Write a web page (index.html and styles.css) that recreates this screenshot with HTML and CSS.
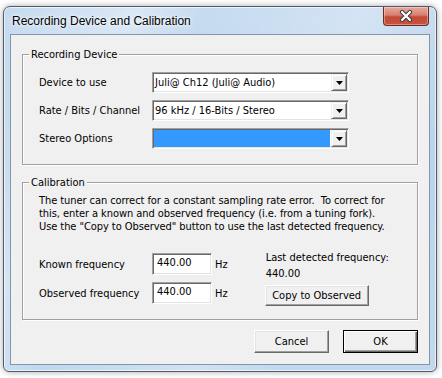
FILE: index.html
```html
<!DOCTYPE html>
<html>
<head>
<meta charset="utf-8">
<link rel="stylesheet" href="styles.css">
</head>
<body>
<div class="window">
  <div class="titlebar">
    <span class="title">Recording Device and Calibration</span>
    <div class="close">
      <svg width="14" height="12" viewBox="0 0 14 12">
        <path d="M3 2 L11 10 M11 2 L3 10" stroke="#3c3c46" stroke-width="4.2" stroke-linecap="round" fill="none"/>
        <path d="M3 2 L11 10 M11 2 L3 10" stroke="#ffffff" stroke-width="2.2" stroke-linecap="round" fill="none"/>
      </svg>
    </div>
  </div>
  <div class="client">
    <div class="group group-device">
      <span class="group-title">Recording Device</span>
      <div class="row">
        <span class="label">Device to use</span>
        <div class="combo"><span class="combo-value">Juli@ Ch12 (Juli@ Audio)</span><span class="combo-btn"><svg width="7" height="4" viewBox="0 0 7 4"><polygon points="0,0 7,0 3.5,4" fill="#000"/></svg></span></div>
      </div>
      <div class="row">
        <span class="label">Rate / Bits / Channel</span>
        <div class="combo"><span class="combo-value">96 kHz / 16-Bits / Stereo</span><span class="combo-btn"><svg width="7" height="4" viewBox="0 0 7 4"><polygon points="0,0 7,0 3.5,4" fill="#000"/></svg></span></div>
      </div>
      <div class="row">
        <span class="label">Stereo Options</span>
        <div class="combo"><span class="combo-value selected"></span><span class="combo-btn"><svg width="7" height="4" viewBox="0 0 7 4"><polygon points="0,0 7,0 3.5,4" fill="#000"/></svg></span></div>
      </div>
    </div>
    <div class="group group-cal">
      <span class="group-title">Calibration</span>
      <p class="desc">The tuner can correct for a constant sampling rate error.&nbsp; To correct for<br>this, enter a known and observed frequency (i.e. from a tuning fork).<br>Use the "Copy to Observed" button to use the last detected frequency.</p>
      <div class="cal-grid">
        <div class="freq-rows">
          <div class="frow"><span class="label">Known frequency</span><span class="textbox">440.00</span><span class="unit">Hz</span></div>
          <div class="frow"><span class="label">Observed frequency</span><span class="textbox">440.00</span><span class="unit">Hz</span></div>
        </div>
        <div class="last">
          <span class="last-line">Last detected frequency:</span>
          <span class="last-line">440.00</span>
          <button class="btn btn-copy">Copy to Observed</button>
        </div>
      </div>
    </div>
    <div class="actions">
      <button class="btn">Cancel</button>
      <button class="btn btn-default">OK</button>
    </div>
  </div>
</div>
</body>
</html>
```
FILE: styles.css
```css
html, body {
  margin: 0;
  padding: 0;
}
body {
  width: 442px;
  height: 378px;
  overflow: hidden;
  background: #ffffff;
  font-family: "DejaVu Sans Condensed", "DejaVu Sans", sans-serif;
  font-size: 11px;
  color: #000;
}
.window {
  margin: 6px 0 0 3px;
  width: 434px;
  height: 366px;
  box-sizing: border-box;
  border: 1px solid #4f5b69;
  border-radius: 7px 7px 6px 6px;
  background:
    linear-gradient(115deg, rgba(255,255,255,0) 0%, rgba(255,255,255,0.35) 22%, rgba(255,255,255,0) 34%, rgba(255,255,255,0.25) 60%, rgba(255,255,255,0) 75%),
    linear-gradient(180deg, #c6dbf0 0%, #bcd4ec 40%, #c2d8ee 100%);
  box-shadow: inset 0 0 0 1px rgba(255,255,255,0.65), 0 0 6px rgba(0,0,0,0.35);
  padding: 0 6px 6px 6px;
  display: flex;
  flex-direction: column;
}
.titlebar {
  height: 27px;
  display: flex;
  justify-content: space-between;
  align-items: flex-start;
}
.title {
  font-family: "Liberation Sans", Arial, sans-serif;
  font-size: 12px;
  margin: 7px 0 0 2px;
  line-height: 14px;
  text-shadow: 0 0 6px rgba(255,255,255,0.9), 0 0 3px rgba(255,255,255,0.9);
}
.close {
  width: 46px;
  height: 19px;
  margin-right: 1px;
  box-sizing: border-box;
  border: 1px solid #6b2a22;
  border-top: none;
  border-radius: 0 0 4px 4px;
  background: linear-gradient(180deg, #e9a89b 0%, #d8806f 45%, #c24a36 55%, #c8533d 100%);
  box-shadow: inset 0 0 0 1px rgba(255,255,255,0.35);
  display: flex;
  align-items: center;
  justify-content: center;
}
.client {
  flex: 1;
  box-sizing: border-box;
  border: 1px solid #8195ad;
  background: #f0f0f0;
  padding: 0 11px 0 11px;
}
.group {
  position: relative;
  box-sizing: border-box;
  width: 396px;
  border: 1px solid #a0a0a0;
  box-shadow: inset 1px 1px 0 #fff, 1px 1px 0 #fff;
}
.group-title {
  position: absolute;
  top: -7px;
  left: 6px;
  padding: 0 2px;
  line-height: 13px;
  background: #f0f0f0;
}
.group-device {
  margin-top: 19px;
  height: 111px;
  padding: 17px 0 0 16px;
  display: flex;
  flex-direction: column;
  gap: 7px;
}
.row {
  display: flex;
  align-items: center;
  height: 21px;
}
.row .label {
  width: 113px;
}
.combo {
  display: flex;
  width: 197px;
  height: 21px;
  box-sizing: border-box;
  background: #fff;
  border: 1px solid;
  border-color: #a0a0a0 #fff #fff #a0a0a0;
  box-shadow: inset 1px 1px 0 #696969, inset -1px -1px 0 #e3e3e3;
  padding: 1px;
}
.combo-value {
  flex: 1;
  padding-left: 1px;
  line-height: 17px;
  white-space: nowrap;
  overflow: hidden;
}
.combo-value.selected {
  background: #3399ff;
  margin-right: 1px;
}
.combo-btn {
  width: 16px;
  height: 17px;
  box-sizing: border-box;
  background: #f0f0f0;
  border: 1px solid;
  border-color: #f0f0f0 #696969 #696969 #f0f0f0;
  box-shadow: inset 1px 1px 0 #fff, inset -1px -1px 0 #a0a0a0;
  display: flex;
  align-items: center;
  justify-content: center;
}
.combo-btn svg {
  display: block;
  margin-top: 1px;
}
.group-cal {
  margin-top: 17px;
  height: 138px;
  padding: 11px 0 0 16px;
}
.desc {
  margin: 0;
  line-height: 13px;
  white-space: nowrap;
  letter-spacing: -0.07px;
}
.cal-grid {
  margin-top: 20px;
  display: flex;
}
.freq-rows {
  display: flex;
  flex-direction: column;
  gap: 7px;
}
.frow {
  display: flex;
  align-items: center;
  height: 22px;
}
.frow .label {
  width: 113px;
}
.textbox {
  width: 60px;
  height: 22px;
  box-sizing: border-box;
  background: #fff;
  border: 1px solid;
  border-color: #a0a0a0 #fff #fff #a0a0a0;
  box-shadow: inset 1px 1px 0 #696969, inset -1px -1px 0 #e3e3e3;
  padding: 2px 0 0 4px;
  line-height: 14px;
}
.unit {
  margin-left: 3px;
}
.last {
  margin-left: 38px;
  margin-top: -3px;
  display: flex;
  flex-direction: column;
  align-items: flex-start;
}
.last-line {
  line-height: 16px;
}
.btn {
  font-family: "DejaVu Sans Condensed", "DejaVu Sans", sans-serif;
  font-size: 11px;
  color: #000;
  background: #f0f0f0;
  box-sizing: border-box;
  border: 1px solid;
  border-color: #fff #696969 #696969 #fff;
  box-shadow: inset -1px -1px 0 #a0a0a0, inset 1px 1px 0 #e3e3e3;
  padding: 0;
  margin: 0;
  border-radius: 0;
  width: 75px;
  height: 23px;
}
.btn-copy {
  width: 104px;
  height: 21px;
  margin-top: 3px;
  margin-left: -1px;
}
.btn-default {
  border-color: #000;
  box-shadow: inset 1px 1px 0 #fff, inset -1px -1px 0 #696969, inset -2px -2px 0 #a0a0a0;
}
.actions {
  margin-top: 10px;
  width: 396px;
  display: flex;
  justify-content: flex-end;
  gap: 14px;
}
```
